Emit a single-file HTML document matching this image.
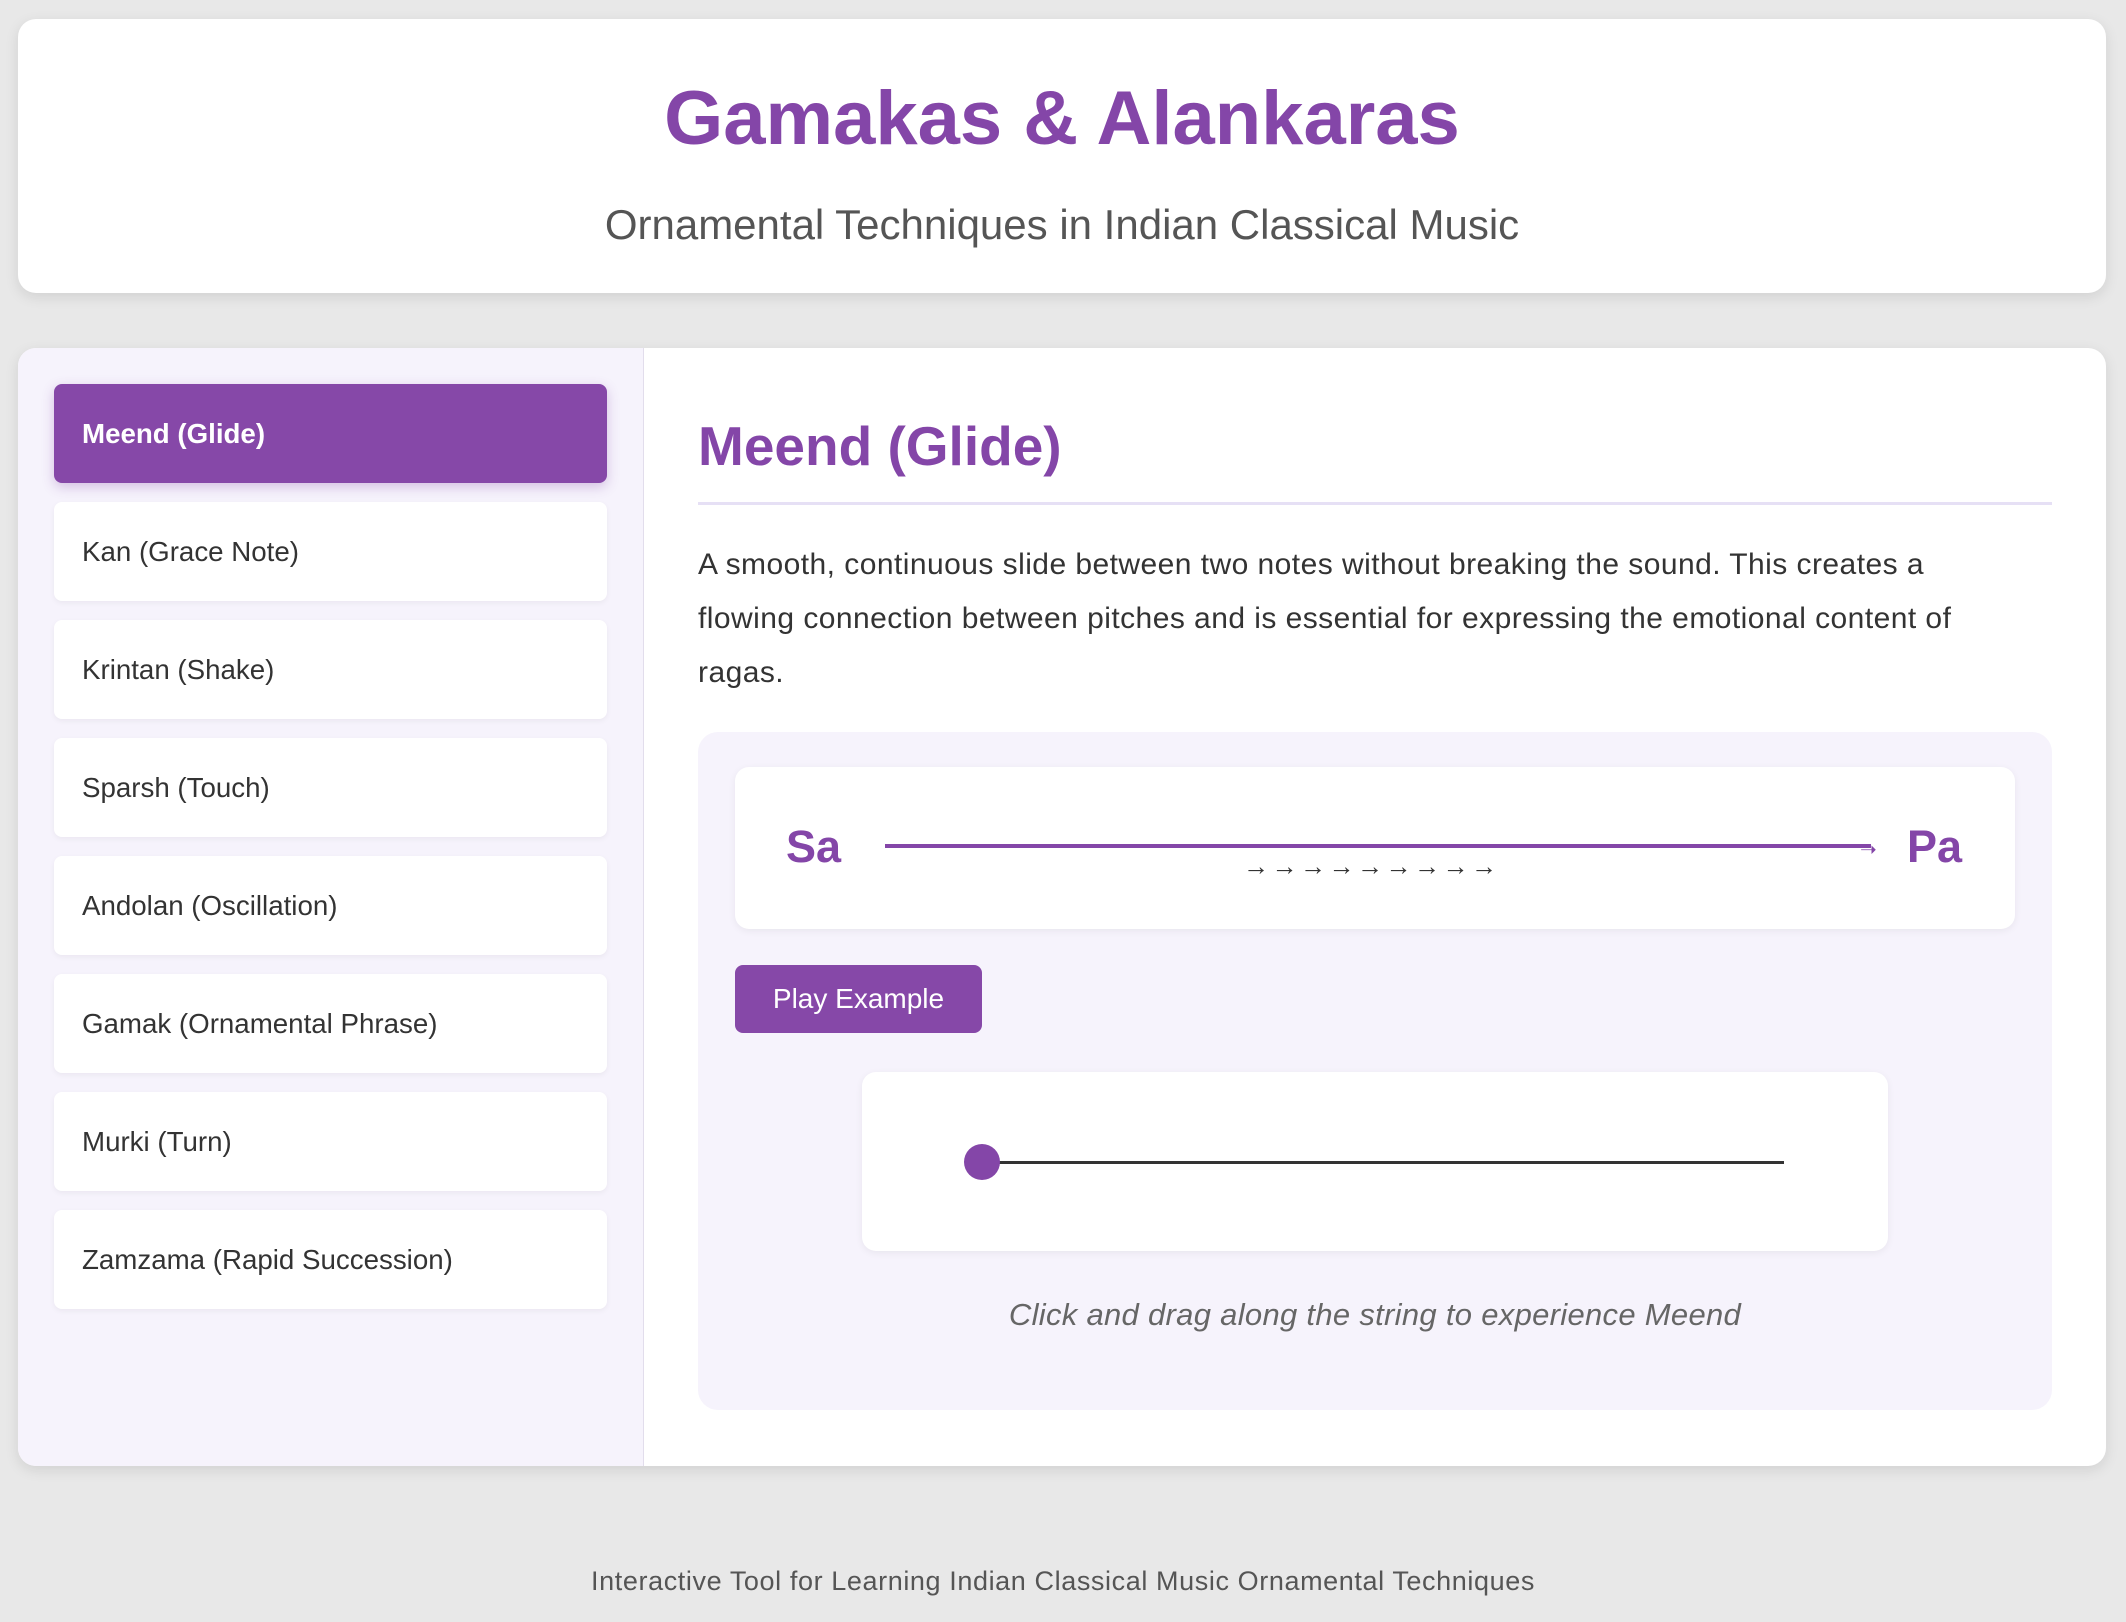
<!DOCTYPE html>
<html><head><meta charset="utf-8"><style>
*{box-sizing:border-box;margin:0;padding:0}
body{width:2126px;height:1622px;background:#e8e8e8;font-family:"Liberation Sans",sans-serif;position:relative;overflow:hidden}
.card{position:absolute;background:#fff;border-radius:18px;box-shadow:0 4px 14px rgba(0,0,0,.1)}
.hdr{left:18px;top:19px;width:2088px;height:274px;text-align:center}
.hdr h1{position:absolute;top:56px;width:100%;font-size:76px;color:#8446a8;font-weight:bold}
.hdr p{position:absolute;top:182px;width:100%;font-size:42px;color:#555}
.main{left:18px;top:348px;width:2088px;height:1118px;overflow:hidden}
.side{position:absolute;left:0;top:0;width:626px;height:100%;background:#f6f3fc;border-right:1px solid #e2ddec}
.item{position:absolute;left:36px;width:553px;height:99px;background:#fff;border-radius:8px;font-size:27.7px;color:#333;line-height:99px;padding-left:28px;box-shadow:0 2px 6px rgba(0,0,0,.05)}
.item.act{background:#8648a8;color:#fff;font-weight:bold;box-shadow:0 4px 12px rgba(134,72,168,.3)}
h2{position:absolute;left:680px;top:66px;font-size:55px;color:#8446a8;font-weight:bold}
.hr{position:absolute;left:680px;top:154px;width:1354px;height:3px;background:#e6e0f5}
.para{position:absolute;left:680px;top:190px;width:1320px;font-size:30px;line-height:54px;color:#333;letter-spacing:0.45px}
.demo{position:absolute;left:680px;top:384px;width:1354px;height:678px;background:#f6f3fc;border-radius:20px}
.notes{position:absolute;left:37px;top:35px;width:1280px;height:162px;background:#fff;border-radius:14px;box-shadow:0 2px 8px rgba(0,0,0,.06)}
.n{position:absolute;top:54px;font-size:45px;font-weight:bold;color:#8446a8}
.btn{position:absolute;left:37px;top:233px;width:247px;height:68px;background:#8648a8;border-radius:8px;color:#fff;font-size:28px;line-height:68px;text-align:center}
.str{position:absolute;left:164px;top:340px;width:1026px;height:179px;background:#fff;border-radius:14px;box-shadow:0 2px 8px rgba(0,0,0,.06)}
.cap{position:absolute;left:0;top:565px;width:100%;text-align:center;font-style:italic;font-size:31px;color:#666;letter-spacing:0.3px}
.foot{position:absolute;top:1566px;width:100%;text-align:center;font-size:27px;color:#555;letter-spacing:0.6px}
</style></head><body>
<div class="card hdr"><h1>Gamakas &amp; Alankaras</h1><p>Ornamental Techniques in Indian Classical Music</p></div>
<div class="card main">
<div class="side">
<div class="item act" style="top:36px">Meend (Glide)</div>
<div class="item" style="top:154px">Kan (Grace Note)</div>
<div class="item" style="top:272px">Krintan (Shake)</div>
<div class="item" style="top:390px">Sparsh (Touch)</div>
<div class="item" style="top:508px">Andolan (Oscillation)</div>
<div class="item" style="top:626px">Gamak (Ornamental Phrase)</div>
<div class="item" style="top:744px">Murki (Turn)</div>
<div class="item" style="top:862px">Zamzama (Rapid Succession)</div>
</div>
<h2>Meend (Glide)</h2>
<div class="hr"></div>
<div class="para">A smooth, continuous slide between two notes without breaking the sound. This creates a flowing connection between pitches and is essential for expressing the emotional content of ragas.</div>
<div class="demo">
<div class="notes">
<div class="n" style="left:51px">Sa</div>
<div class="n" style="right:53px">Pa</div>
<div style="position:absolute;left:150px;top:77px;width:986px;height:4px;background:#8446a8"></div>
<div style="position:absolute;left:1125px;top:70px;font-size:20px;color:#8446a8">➝</div>
<div style="position:absolute;left:508px;top:84px;font-size:26px;color:#333;letter-spacing:2.5px">→→→→→→→→→</div>
</div>
<div class="btn">Play Example</div>
<div class="str">
<div style="position:absolute;left:120px;top:89px;width:802px;height:3px;background:#333"></div>
<div style="position:absolute;left:102px;top:72px;width:36px;height:36px;border-radius:50%;background:#8446a8"></div>
</div>
<div class="cap">Click and drag along the string to experience Meend</div>
</div>
</div>
<div class="foot">Interactive Tool for Learning Indian Classical Music Ornamental Techniques</div>
</body></html>
